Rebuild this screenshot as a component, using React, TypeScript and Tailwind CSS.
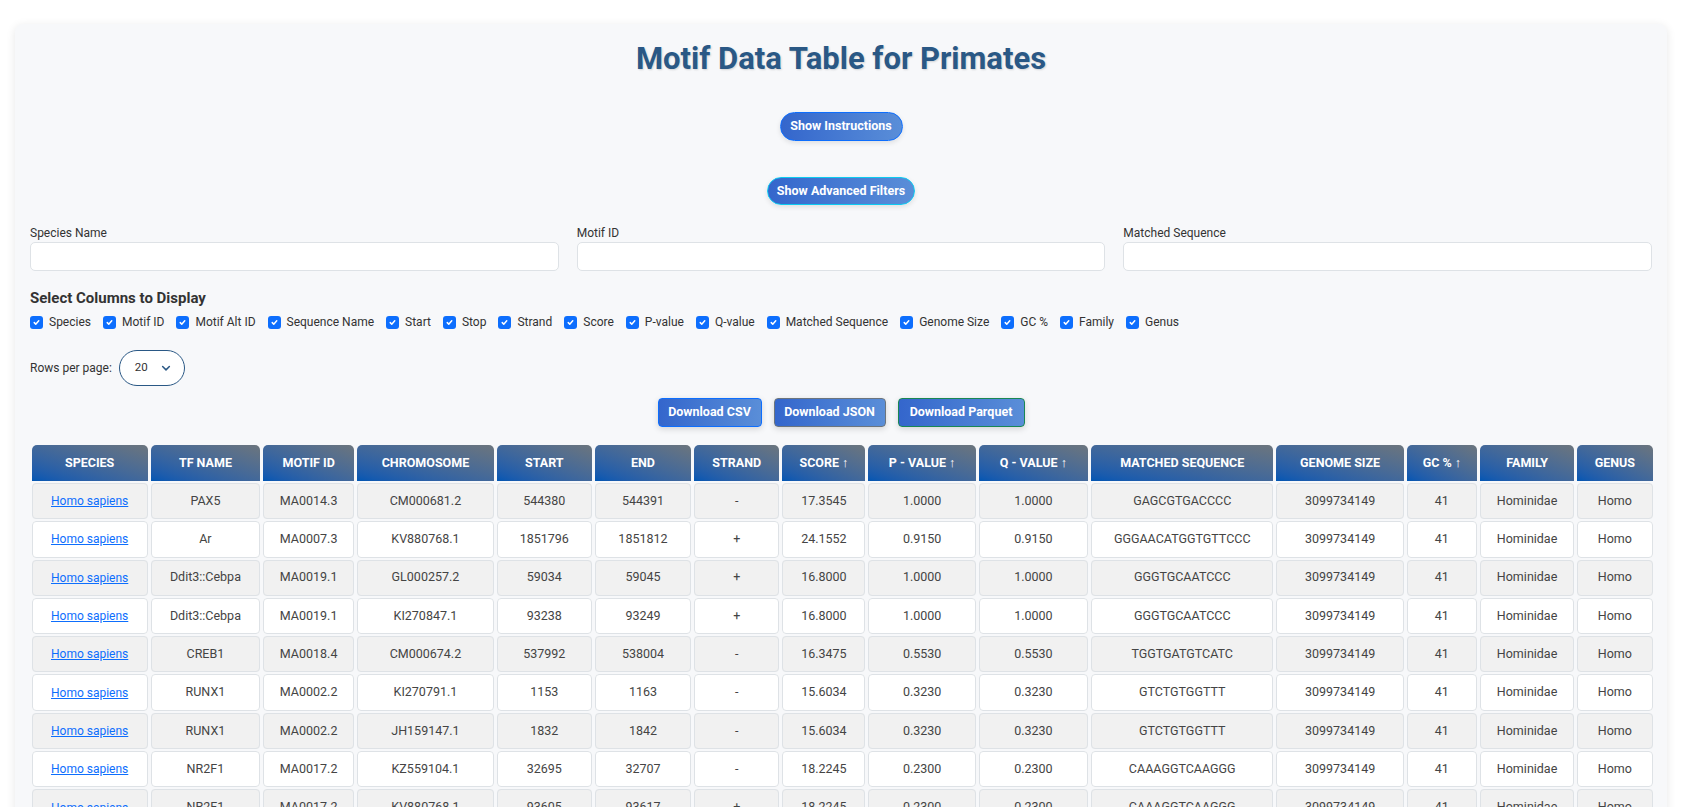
import React, { useState } from 'react';

const FONT = { fontFamily: 'Roboto, "Noto Sans", sans-serif' };

const columnOptions = [
  'Species',
  'Motif ID',
  'Motif Alt ID',
  'Sequence Name',
  'Start',
  'Stop',
  'Strand',
  'Score',
  'P-value',
  'Q-value',
  'Matched Sequence',
  'Genome Size',
  'GC %',
  'Family',
  'Genus',
];

const headers = [
  { label: 'SPECIES', w: 'w-[116px]' },
  { label: 'TF NAME', w: 'w-[109px]' },
  { label: 'MOTIF ID', w: 'w-[91px]' },
  { label: 'CHROMOSOME', w: 'w-[136px]' },
  { label: 'START', w: 'w-[95px]' },
  { label: 'END', w: 'w-[96px]' },
  { label: 'STRAND', w: 'w-[85px]' },
  { label: 'SCORE ↑', w: 'w-[83px]' },
  { label: 'P - VALUE ↑', w: 'w-[107px]' },
  { label: 'Q - VALUE ↑', w: 'w-[109px]' },
  { label: 'MATCHED SEQUENCE', w: 'w-[182px]' },
  { label: 'GENOME SIZE', w: 'w-[127px]' },
  { label: 'GC % ↑', w: 'w-[70px]' },
  { label: 'FAMILY', w: 'w-[94px]' },
  { label: 'GENUS', w: 'w-[75px]' },
];

// tf, motif, chromosome, start, end, strand, score, p, q, sequence
const rows: string[][] = [
  ['PAX5', 'MA0014.3', 'CM000681.2', '544380', '544391', '-', '17.3545', '1.0000', '1.0000', 'GAGCGTGACCCC'],
  ['Ar', 'MA0007.3', 'KV880768.1', '1851796', '1851812', '+', '24.1552', '0.9150', '0.9150', 'GGGAACATGGTGTTCCC'],
  ['Ddit3::Cebpa', 'MA0019.1', 'GL000257.2', '59034', '59045', '+', '16.8000', '1.0000', '1.0000', 'GGGTGCAATCCC'],
  ['Ddit3::Cebpa', 'MA0019.1', 'KI270847.1', '93238', '93249', '+', '16.8000', '1.0000', '1.0000', 'GGGTGCAATCCC'],
  ['CREB1', 'MA0018.4', 'CM000674.2', '537992', '538004', '-', '16.3475', '0.5530', '0.5530', 'TGGTGATGTCATC'],
  ['RUNX1', 'MA0002.2', 'KI270791.1', '1153', '1163', '-', '15.6034', '0.3230', '0.3230', 'GTCTGTGGTTT'],
  ['RUNX1', 'MA0002.2', 'JH159147.1', '1832', '1842', '-', '15.6034', '0.3230', '0.3230', 'GTCTGTGGTTT'],
  ['NR2F1', 'MA0017.2', 'KZ559104.1', '32695', '32707', '-', '18.2245', '0.2300', '0.2300', 'CAAAGGTCAAGGG'],
  ['NR2F1', 'MA0017.2', 'KV880768.1', '93605', '93617', '+', '18.2245', '0.2300', '0.2300', 'CAAAGGTCAAGGG'],
];

function CheckBox({ label }: { label: string }) {
  return (
    <label className="flex items-center gap-[6px] text-[12px] text-[#333]">
      <span className="flex h-[13px] w-[13px] items-center justify-center rounded-[3px] bg-[#0d6efd]">
        <svg viewBox="0 0 12 12" className="h-[9px] w-[9px]" fill="none" stroke="white" strokeWidth="2" strokeLinecap="round" strokeLinejoin="round">
          <path d="M3 6.2l2 2 4-4.4" />
        </svg>
      </span>
      {label}
    </label>
  );
}

export default function App() {
  const [perPage] = useState('20');

  return (
    <div className="min-h-screen bg-white pl-[15px] pr-[30px] pt-[24px]" style={FONT}>
      <div className="rounded-[8px] bg-[#f7f8fa] px-[15px] pt-[16px] pb-6 shadow-[0_2px_10px_rgba(0,0,0,0.1)]">
        <h1 className="text-center text-[31px] font-bold leading-[38px] text-[#2a5885] [text-shadow:1px_1px_2px_rgba(0,0,0,0.15)]">
          Motif Data Table for Primates
        </h1>

        <div className="mt-[34px] flex justify-center">
          <button className="h-[29px] w-[123px] rounded-full border border-[#0d6efd] bg-linear-to-r from-[#3466cc] to-[#5a8ed8] text-[12.5px] font-bold text-white shadow-[0_2px_5px_rgba(0,0,0,0.1)]">
            Show Instructions
          </button>
        </div>

        <div className="mt-[36px] flex justify-center">
          <button className="h-[28px] w-[148px] rounded-full border border-[#0dcaf0] bg-linear-to-r from-[#3466cc] to-[#5a8ed8] text-[12.5px] font-bold text-white shadow-[0_2px_5px_rgba(0,0,0,0.1)]">
            Show Advanced Filters
          </button>
        </div>

        <div className="mt-[19px] grid grid-cols-3 gap-x-[18px]">
          {['Species Name', 'Motif ID', 'Matched Sequence'].map((f) => (
            <div key={f} className="flex flex-col">
              <span className="text-[12px] leading-[18px] text-[#333]">{f}</span>
              <input type="text" className="h-[29px] rounded-[5px] border border-[#dee2e6] bg-white px-2 text-[13px] outline-none" />
            </div>
          ))}
        </div>

        <h3 className="mt-[17px] text-[15px] font-bold leading-[20px] text-[#333]">Select Columns to Display</h3>
        <div className="mt-[5px] flex flex-wrap items-center gap-x-[12px] leading-[18px]">
          {columnOptions.map((c) => (
            <CheckBox key={c} label={c} />
          ))}
        </div>

        <div className="mt-[19px] flex items-center gap-[7px]">
          <span className="text-[12px] text-[#333]">Rows per page:</span>
          <div className="flex h-[36px] w-[66px] items-center justify-between rounded-full border border-[#2a5885] bg-white pl-[15px] pr-[12px]">
            <span className="text-[11.5px] text-[#333]">{perPage}</span>
            <svg viewBox="0 0 16 16" className="h-[12px] w-[12px]" fill="none" stroke="#2a5885" strokeWidth="2" strokeLinecap="round" strokeLinejoin="round">
              <path d="M3.5 6l4.5 4.5L12.5 6" />
            </svg>
          </div>
        </div>

        <div className="mt-[12px] flex justify-center gap-[12px]">
          <button className="h-[29px] w-[104px] rounded-[4px] border border-[#0d6efd] bg-linear-to-r from-[#3466cc] to-[#5a8ed8] text-[12.5px] font-bold text-white shadow-[0_2px_6px_rgba(0,0,0,0.15)]">
            Download CSV
          </button>
          <button className="h-[29px] w-[112px] rounded-[4px] border border-[#6c757d] bg-linear-to-r from-[#3466cc] to-[#5a8ed8] text-[12.5px] font-bold text-white shadow-[0_2px_6px_rgba(0,0,0,0.15)]">
            Download JSON
          </button>
          <button className="h-[29px] w-[127px] rounded-[4px] border border-[#198754] bg-linear-to-r from-[#3466cc] to-[#5a8ed8] text-[12.5px] font-bold text-white shadow-[0_2px_6px_rgba(0,0,0,0.15)]">
            Download Parquet
          </button>
        </div>

        <table className="mt-[16px] -ml-[1.5px] w-[calc(100%+5px)] table-fixed border-separate border-spacing-x-[3px] border-spacing-y-[2px]">
          <thead>
            <tr>
              {headers.map((h) => (
                <th
                  key={h.label}
                  className={`${h.w} h-[36px] rounded-t-[5px] bg-linear-to-tr from-[#0056b3] to-[#6c757d] px-1 text-center text-[12.5px] font-bold text-white`}
                >
                  {h.label}
                </th>
              ))}
            </tr>
          </thead>
          <tbody>
            {rows.map((r, i) => (
              <tr key={i} className={i % 2 === 0 ? 'bg-[#f1f1f1]' : 'bg-white'}>
                <td className="h-[36.3px] rounded-[4px] border border-[#dee2e6] text-center text-[12px]">
                  <a href="#" className="text-[#0d6efd] underline">
                    Homo sapiens
                  </a>
                </td>
                {r.map((v, j) => (
                  <td key={j} className="h-[36.3px] rounded-[4px] border border-[#dee2e6] text-center text-[12.5px] text-[#444]">
                    {v}
                  </td>
                ))}
                <td className="rounded-[4px] border border-[#dee2e6] text-center text-[12.5px] text-[#444]">3099734149</td>
                <td className="rounded-[4px] border border-[#dee2e6] text-center text-[12.5px] text-[#444]">41</td>
                <td className="rounded-[4px] border border-[#dee2e6] text-center text-[12.5px] text-[#444]">Hominidae</td>
                <td className="rounded-[4px] border border-[#dee2e6] text-center text-[12.5px] text-[#444]">Homo</td>
              </tr>
            ))}
          </tbody>
        </table>
      </div>
    </div>
  );
}
